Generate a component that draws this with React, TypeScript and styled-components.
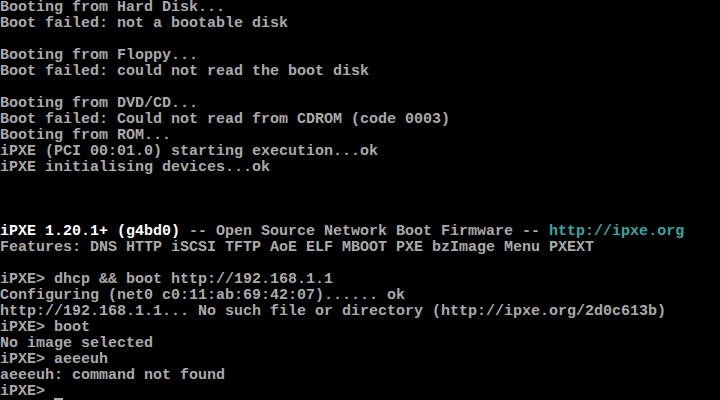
import React from "react";
import styled, { createGlobalStyle } from "styled-components";

const Global = createGlobalStyle`
  html, body { margin: 0; padding: 0; background: #000; }
  body { width: 720px; height: 400px; overflow: hidden; }
`;

const Screen = styled.div`
  width: 720px;
  height: 400px;
  background: #000;
  color: #aaaaaa;
  font-family: "Liberation Mono", "DejaVu Sans Mono", monospace;
  font-size: 15px;
  font-weight: bold;
  line-height: 16px;
  display: flex;
  flex-direction: column;
  overflow: hidden;
`;

const Line = styled.div`
  height: 16px;
  white-space: pre;
`;

const Span = styled.span<{ $tone?: "bright" | "cyan" }>`
  color: ${(p) => (p.$tone === "bright" ? "#ffffff" : p.$tone === "cyan" ? "#30a8a0" : "inherit")};
`;

const Cursor = styled.span`
  display: inline-block;
  width: 9px;
  height: 16px;
  vertical-align: top;
  position: relative;
  &::after {
    content: "";
    position: absolute;
    left: 0;
    right: 0;
    bottom: 0;
    height: 2px;
    background: #aaaaaa;
  }
`;

const lines: React.ReactNode[] = [
  "Booting from Hard Disk...",
  "Boot failed: not a bootable disk",
  "",
  "Booting from Floppy...",
  "Boot failed: could not read the boot disk",
  "",
  "Booting from DVD/CD...",
  "Boot failed: Could not read from CDROM (code 0003)",
  "Booting from ROM...",
  "iPXE (PCI 00:01.0) starting execution...ok",
  "iPXE initialising devices...ok",
  "",
  "",
  "",
  <>
    <Span $tone="bright">iPXE 1.20.1+ (g4bd0)</Span> -- Open Source Network Boot Firmware --{" "}
    <Span $tone="cyan">http://ipxe.org</Span>
  </>,
  "Features: DNS HTTP iSCSI TFTP AoE ELF MBOOT PXE bzImage Menu PXEXT",
  "",
  "iPXE> dhcp && boot http://192.168.1.1",
  "Configuring (net0 c0:11:ab:69:42:07)...... ok",
  "http://192.168.1.1... No such file or directory (http://ipxe.org/2d0c613b)",
  "iPXE> boot",
  "No image selected",
  "iPXE> aeeeuh",
  "aeeeuh: command not found",
  <>
    iPXE&gt; <Cursor />
  </>,
];

export default function App() {
  return (
    <>
      <Global />
      <Screen>
        {lines.map((l, i) => (
          <Line key={i}>{l}</Line>
        ))}
      </Screen>
    </>
  );
}
